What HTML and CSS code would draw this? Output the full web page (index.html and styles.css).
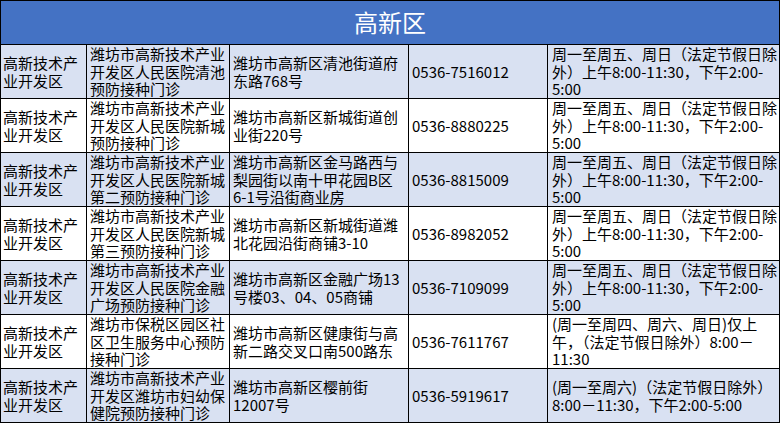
FILE: index.html
```html
<!DOCTYPE html>
<html lang="zh-CN">
<head>
<meta charset="utf-8">
<title>高新区</title>
<link rel="stylesheet" href="styles.css">
</head>
<body>
<div class="sheet">
  <div class="title">高新区</div>

  <div class="cell alt c1">高新技术产<br>业开发区</div>
  <div class="cell alt">潍坊市高新技术产业<br>开发区人民医院清池<br>预防接种门诊</div>
  <div class="cell alt">潍坊市高新区清池街道府<br>东路768号</div>
  <div class="cell alt">0536-7516012</div>
  <div class="cell alt c5">周一至周五、周日（法定节假日除<br>外）上午8:00-11:30，下午2:00-<br>5:00</div>

  <div class="cell c1">高新技术产<br>业开发区</div>
  <div class="cell">潍坊市高新技术产业<br>开发区人民医院新城<br>预防接种门诊</div>
  <div class="cell">潍坊市高新区新城街道创<br>业街220号</div>
  <div class="cell">0536-8880225</div>
  <div class="cell c5">周一至周五、周日（法定节假日除<br>外）上午8:00-11:30，下午2:00-<br>5:00</div>

  <div class="cell alt c1">高新技术产<br>业开发区</div>
  <div class="cell alt">潍坊市高新技术产业<br>开发区人民医院新城<br>第二预防接种门诊</div>
  <div class="cell alt">潍坊市高新区金马路西与<br>梨园街以南十甲花园B区<br>6-1号沿街商业房</div>
  <div class="cell alt">0536-8815009</div>
  <div class="cell alt c5">周一至周五、周日（法定节假日除<br>外）上午8:00-11:30，下午2:00-<br>5:00</div>

  <div class="cell c1">高新技术产<br>业开发区</div>
  <div class="cell">潍坊市高新技术产业<br>开发区人民医院新城<br>第三预防接种门诊</div>
  <div class="cell">潍坊市高新区新城街道潍<br>北花园沿街商铺3-10</div>
  <div class="cell">0536-8982052</div>
  <div class="cell c5">周一至周五、周日（法定节假日除<br>外）上午8:00-11:30，下午2:00-<br>5:00</div>

  <div class="cell alt c1">高新技术产<br>业开发区</div>
  <div class="cell alt">潍坊市高新技术产业<br>开发区人民医院金融<br>广场预防接种门诊</div>
  <div class="cell alt">潍坊市高新区金融广场13<br>号楼03、04、05商铺</div>
  <div class="cell alt">0536-7109099</div>
  <div class="cell alt c5">周一至周五、周日（法定节假日除<br>外）上午8:00-11:30，下午2:00-<br>5:00</div>

  <div class="cell c1">高新技术产<br>业开发区</div>
  <div class="cell">潍坊市保税区园区社<br>区卫生服务中心预防<br>接种门诊</div>
  <div class="cell">潍坊市高新区健康街与高<br>新二路交叉口南500路东</div>
  <div class="cell">0536-7611767</div>
  <div class="cell c5">(周一至周四、周六、周日)仅上<br>午，（法定节假日除外）8:00－<br>11:30</div>

  <div class="cell alt c1">高新技术产<br>业开发区</div>
  <div class="cell alt">潍坊市高新技术产业<br>开发区潍坊市妇幼保<br>健院预防接种门诊</div>
  <div class="cell alt">潍坊市高新区樱前街<br>12007号</div>
  <div class="cell alt">0536-5919617</div>
  <div class="cell alt c5">(周一至周六)（法定节假日除外）<br>8:00－11:30，下午2:00-5:00</div>
</div>
</body>
</html>
```

FILE: styles.css
```css
html, body {
  margin: 0;
  padding: 0;
  background: #ffffff;
}

.sheet {
  width: 780px;
  box-sizing: border-box;
  padding: 1px;
  background: #000000;
  display: grid;
  grid-template-columns: 85px 142px 178px 138px 231px;
  grid-template-rows: 43px repeat(7, 53px);
  gap: 1px;
  font-family: "Noto Sans CJK SC", "Noto Sans", sans-serif;
  font-size: 15px;
  color: #000000;
}

.title {
  grid-column: 1 / -1;
  background: #4472c4;
  color: #ffffff;
  font-size: 24px;
  display: flex;
  align-items: center;
  justify-content: center;
  line-height: 1;
  padding-bottom: 1px;
}

.cell {
  background: #ffffff;
  display: flex;
  align-items: center;
  padding: 0 2px 0 3px;
  line-height: 17.5px;
  white-space: nowrap;
}

.cell.alt {
  background: #d9e1f2;
}

.cell.c1 {
  padding-left: 2px;
}

.cell.c5 {
  padding-left: 4px;
}
```
